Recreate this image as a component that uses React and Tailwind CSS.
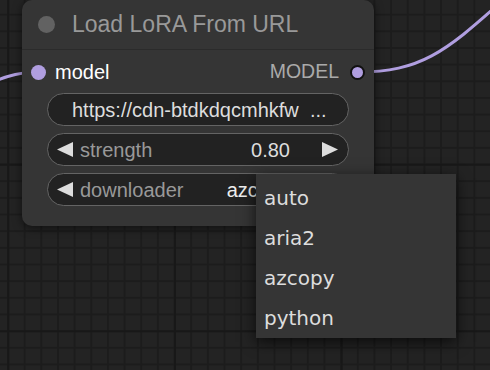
import React from 'react';

const options = ['auto', 'aria2', 'azcopy', 'python'];

const Arrow = ({ dir }) => (
  <svg width="16" height="15" viewBox="0 0 16 15" className="shrink-0">
    {dir === 'left' ? (
      <polygon points="16,0 16,15 0,7.5" fill="#dddddd" />
    ) : (
      <polygon points="0,0 0,15 16,7.5" fill="#dddddd" />
    )}
  </svg>
);

const App = () => {
  return (
    <div className="relative w-[490px] h-[370px] overflow-hidden bg-[#232323] font-['Liberation_Sans',Arial,sans-serif]">
      {/* grid */}
      <div className="absolute inset-0 [background-image:linear-gradient(to_right,#1c1c1c_1.5px,transparent_1.5px),linear-gradient(to_bottom,#1c1c1c_1.5px,transparent_1.5px)] [background-size:16.667px_16.667px] [background-position:7px_-3px]" />
      <div className="absolute inset-0 [background-image:linear-gradient(to_right,#181818_2px,transparent_2px),linear-gradient(to_bottom,#181818_2px,transparent_2px)] [background-size:166.67px_166.67px] [background-position:174px_-3px]" />

      {/* links */}
      <svg className="absolute inset-0" width="490" height="370">
        <path d="M-90,104 C-30,104 -10,72 38,72" stroke="#b09ee0" strokeWidth="3" fill="none" />
        <path d="M358,72 C420,72 445,52 500,3" stroke="#b09ee0" strokeWidth="3" fill="none" />
      </svg>

      {/* node */}
      <div className="absolute left-[22px] top-0 w-[352px] rounded-[10px] bg-[#353535] shadow-[0_2px_10px_rgba(0,0,0,0.55)]">
        <div className="h-[50px] flex items-center pl-[16px] border-b border-[#2b2b2b]">
          <div className="w-[17px] h-[17px] rounded-full bg-[#626262]" />
          <span className="ml-[17px] text-[23px] text-[#999999] leading-none">Load LoRA From URL</span>
        </div>
        <div className="pt-[9px] pb-[20px]">
          <div className="h-[26px] flex items-center justify-between pl-[9px] pr-[9px]">
            <div className="flex items-center">
              <div className="w-[15px] h-[15px] rounded-full bg-[#b09ee0]" />
              <span className="ml-[9px] text-[20px] text-white leading-none">model</span>
            </div>
            <div className="flex items-center">
              <span className="text-[19.5px] text-[#aaaaaa] leading-none">MODEL</span>
              <div className="ml-[11px] w-[15px] h-[15px] rounded-full bg-[#b09ee0] border-2 border-[#111]" />
            </div>
          </div>

          <div className="mt-[8px] px-[25px] flex flex-col gap-[7px]">
            <div className="h-[33px] rounded-full border border-[#646464] bg-[#222222] flex items-center pl-[24px] text-[20px] text-[#dddddd]">
              https://cdn-btdkdqcmhkfw&nbsp;&nbsp;...
            </div>
            <div className="h-[33px] rounded-full border border-[#646464] bg-[#222222] flex items-center pl-[9px] pr-[10px] text-[20px]">
              <Arrow dir="left" />
              <span className="ml-[7px] text-[#999999]">strength</span>
              <span className="ml-auto text-[#dddddd]">0.80</span>
              <span className="ml-[32px]"><Arrow dir="right" /></span>
            </div>
            <div className="h-[33px] rounded-full border border-[#646464] bg-[#222222] flex items-center pl-[9px] pr-[10px] text-[20px]">
              <Arrow dir="left" />
              <span className="ml-[7px] text-[#999999]">downloader</span>
              <span className="ml-auto text-[#eeeeee]">azcopy</span>
              <span className="ml-[32px]"><Arrow dir="right" /></span>
            </div>
          </div>
        </div>
      </div>

      {/* context menu */}
      <div className="absolute left-[256px] top-[174px] w-[200px] h-[164px] pt-[4px] bg-[#353535] shadow-[0_4px_14px_rgba(0,0,0,0.7)] font-['DejaVu_Sans',sans-serif]">
        {options.map((o) => (
          <div key={o} className="h-[40px] flex items-center pl-[8px] text-[20px] text-[#dddddd]">
            {o}
          </div>
        ))}
      </div>
    </div>
  );
};

export default App;
